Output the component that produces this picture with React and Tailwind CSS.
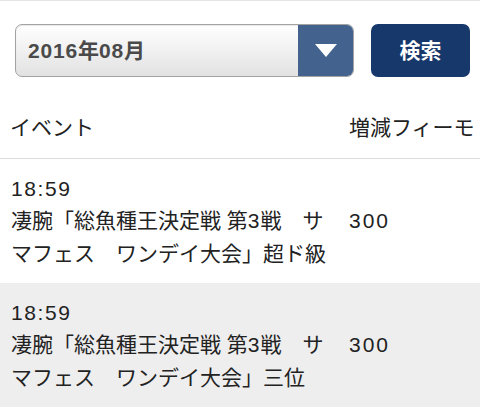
function N({ t, cls = "tracking-[1.6px]" }) {
  const parts = t.split(/([0-9:]+)/);
  return (
    <>
      {parts.map((p, i) =>
        /^[0-9:]+$/.test(p) ? (
          <span key={i} className={cls}>{p}</span>
        ) : (
          <span key={i}>{p}</span>
        )
      )}
    </>
  );
}

export default function App() {
  const font = { fontFamily: '"Liberation Sans", "Noto Sans CJK JP", sans-serif' };
  const rows = [
    { time: "18:59", l1: "凄腕「総魚種王決定戦 第3戦　サ", l2: "マフェス　ワンデイ大会」超ド級", v: "300", bg: "bg-white" },
    { time: "18:59", l1: "凄腕「総魚種王決定戦 第3戦　サ", l2: "マフェス　ワンデイ大会」三位", v: "300", bg: "bg-[#eeeeee]" },
  ];
  return (
    <div className="w-[480px] h-[407px] overflow-hidden bg-white border-t border-[#e4e4e4] text-[#222]" style={font}>
      <div className="flex gap-[17px] pl-[15px] pr-[10px] pt-[23px]">
        <div className="flex-1 h-[53px] flex rounded-[7px] border border-[#a3a3a3] overflow-hidden bg-gradient-to-b from-white to-[#e2e2e2] shadow-[inset_0_1px_1px_rgba(0,0,0,0.1)]">
          <div className="flex-1 flex items-center pl-[12px] text-[21px] font-bold text-[#4a4a4a]">
            <N t="2016年08月" cls="tracking-[0.8px]" />
          </div>
          <div className="w-[55px] bg-[#43628e] flex items-center justify-center">
            <svg width="22" height="13" viewBox="0 0 22 13"><polygon points="0,0 22,0 11,13" fill="white" /></svg>
          </div>
        </div>
        <div className="w-[99px] h-[53px] rounded-[7px] bg-[#17386a] flex items-center justify-center text-white text-[21px] font-bold">検索</div>
      </div>
      <div className="grid grid-cols-[349px_1fr] h-[63px] items-center mt-[19px] border-b border-[#dcdcdc] text-[21px]">
        <div className="pl-[10px] pt-[2px]">イベント</div>
        <div className="pt-[2px] whitespace-nowrap">増減フィーモ</div>
      </div>
      {rows.map((r, i) => (
        <div key={i} className={`grid grid-cols-[349px_1fr] items-center h-[124px] ${r.bg} text-[21px] leading-[32.5px]`}>
          <div className="pl-[11px] pt-[1px]">
            <div><N t={r.time} /></div>
            <div className="whitespace-nowrap"><N t={r.l1} cls="tracking-[1px]" /></div>
            <div className="whitespace-nowrap">{r.l2}</div>
          </div>
          <div className="pt-[1px]"><N t={r.v} cls="tracking-[2px]" /></div>
        </div>
      ))}
    </div>
  );
}
